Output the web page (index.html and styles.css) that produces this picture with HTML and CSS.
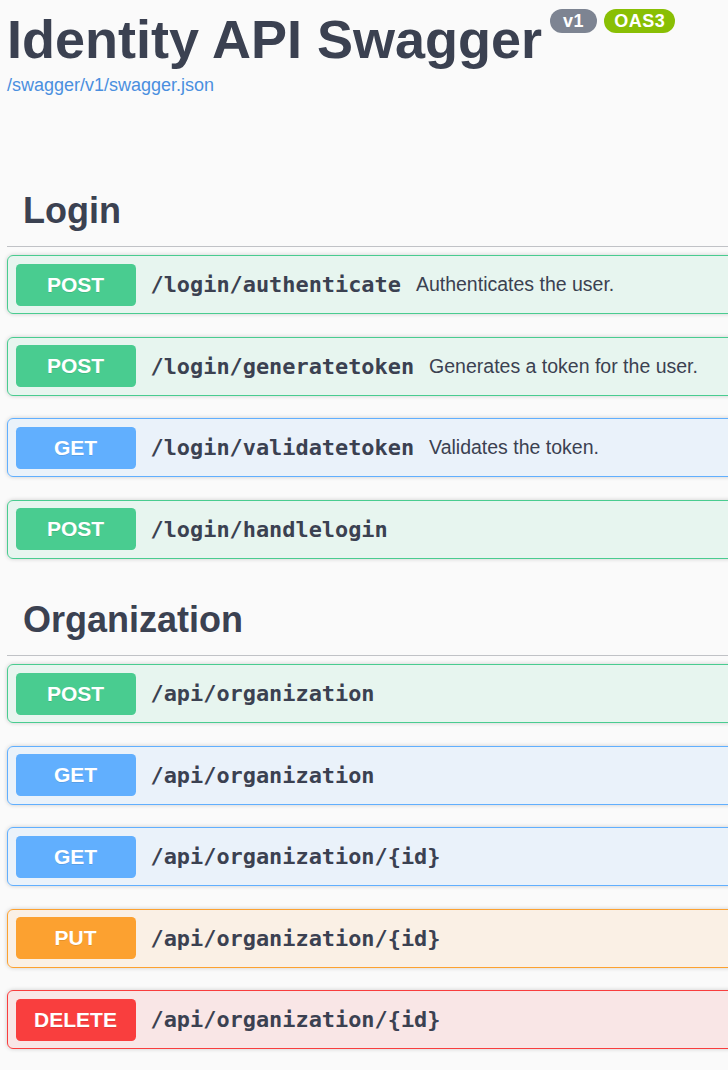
FILE: index.html
```html
<!DOCTYPE html>
<html lang="en">
<head>
<meta charset="utf-8">
<title>Identity API Swagger</title>
<link rel="stylesheet" href="styles.css">
</head>
<body>
<div class="wrapper">
  <div class="info">
    <div class="title-row">
      <h2 class="title">Identity API Swagger</h2>
      <span class="badge badge-version">v1</span>
      <span class="badge badge-oas">OAS3</span>
    </div>
    <a class="spec-link" href="#">/swagger/v1/swagger.json</a>
  </div>

  <section class="tag-section">
    <h3 class="tag">Login</h3>
    <div class="opblock post">
      <span class="method">POST</span>
      <span class="path">/login/authenticate</span>
      <span class="desc">Authenticates the user.</span>
    </div>
    <div class="opblock post">
      <span class="method">POST</span>
      <span class="path">/login/generatetoken</span>
      <span class="desc">Generates a token for the user.</span>
    </div>
    <div class="opblock get">
      <span class="method">GET</span>
      <span class="path">/login/validatetoken</span>
      <span class="desc">Validates the token.</span>
    </div>
    <div class="opblock post">
      <span class="method">POST</span>
      <span class="path">/login/handlelogin</span>
    </div>
  </section>

  <section class="tag-section">
    <h3 class="tag">Organization</h3>
    <div class="opblock post">
      <span class="method">POST</span>
      <span class="path">/api/organization</span>
    </div>
    <div class="opblock get">
      <span class="method">GET</span>
      <span class="path">/api/organization</span>
    </div>
    <div class="opblock get">
      <span class="method">GET</span>
      <span class="path">/api/organization/{id}</span>
    </div>
    <div class="opblock put">
      <span class="method">PUT</span>
      <span class="path">/api/organization/{id}</span>
    </div>
    <div class="opblock delete">
      <span class="method">DELETE</span>
      <span class="path">/api/organization/{id}</span>
    </div>
  </section>
</div>
</body>
</html>
```

FILE: styles.css
```css
html, body {
  margin: 0;
  padding: 0;
  overflow: hidden;
  background: #fafafa;
}

body {
  font-family: "Liberation Sans", Arial, sans-serif;
  color: #3b4151;
}

.wrapper {
  width: 1400px;
  padding: 8px 0 0 7px;
}

.info {
  margin-bottom: 79px;
}

.title-row {
  display: flex;
  align-items: flex-start;
}

.title {
  margin: 0;
  font-size: 54px;
  line-height: 62px;
  font-weight: 700;
  color: #3b4151;
}

.badge {
  margin-top: 1px;
  margin-left: 7px;
  padding: 1px 10px;
  border-radius: 20px;
  color: #fff;
  font-size: 18px;
  line-height: 22px;
  font-weight: 700;
  letter-spacing: 0.5px;
}

.badge-version {
  background: #7d8492;
  margin-left: 8px;
  padding: 1px 13px;
}

.badge-oas {
  background: #89bf04;
  padding: 1px 10px;
}

.spec-link {
  display: block;
  margin-top: 5px;
  font-size: 18px;
  line-height: 21px;
  color: #4a8fdf;
  text-decoration: none;
}

.tag-section + .tag-section {
  padding-top: 3px;
}

.tag {
  margin: 0 0 8px;
  padding: 15px 30px 15px 16px;
  font-size: 36px;
  line-height: 41px;
  font-weight: 700;
  color: #3b4151;
  border-bottom: 1px solid rgba(59, 65, 81, 0.3);
}

.opblock {
  display: flex;
  align-items: center;
  margin: 0 0 22.5px;
  padding: 7.5px;
  border: 1px solid #000;
  border-radius: 6px;
  box-shadow: 0 0 4px rgba(0, 0, 0, 0.19);
}

.method {
  min-width: 120px;
  padding: 9px 0;
  border-radius: 4.5px;
  font-size: 21px;
  line-height: 24px;
  font-weight: 700;
  color: #fff;
  text-align: center;
  text-shadow: 0 1px 0 rgba(0, 0, 0, 0.1);
}

.path {
  padding: 0 15px;
  font-family: "DejaVu Sans Mono", "Liberation Mono", monospace;
  font-size: 21.9px;
  font-weight: 700;
  color: #3b4151;
}

.desc {
  font-size: 19.5px;
  color: #3b4151;
}

.post { background: rgba(73, 204, 144, 0.1); border-color: #49cc90; }
.post .method { background: #49cc90; }

.get { background: rgba(97, 175, 254, 0.1); border-color: #61affe; }
.get .method { background: #61affe; }

.put { background: rgba(252, 161, 48, 0.1); border-color: #fca130; }
.put .method { background: #fca130; }

.delete { background: rgba(249, 62, 62, 0.1); border-color: #f93e3e; }
.delete .method { background: #f93e3e; }
```
